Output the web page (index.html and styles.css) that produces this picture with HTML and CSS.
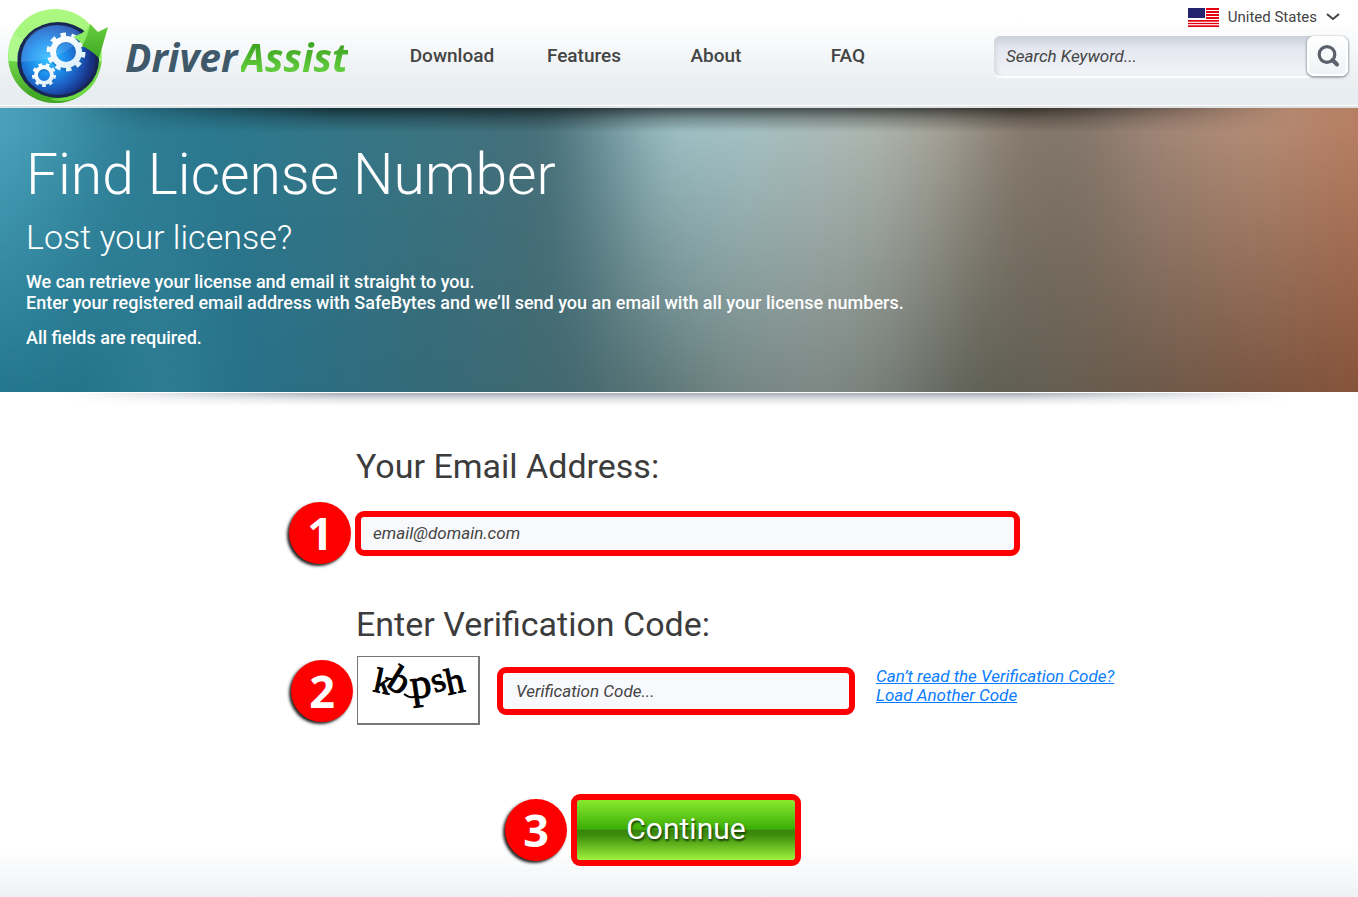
FILE: index.html
```html
<!DOCTYPE html>
<html lang="en">
<head>
<meta charset="utf-8">
<title>Find License Number - DriverAssist</title>
<link rel="stylesheet" href="styles.css">
</head>
<body>
<header class="header">
  <a class="brand" href="#">
    <svg class="brand-mark" viewBox="0 0 110 105" aria-hidden="true">
      <defs>
        <linearGradient id="ring" x1="0" y1="0" x2="0" y2="1"><stop offset="0" stop-color="#adf982"/><stop offset=".55" stop-color="#9cf27a"/><stop offset=".56" stop-color="#6fd348"/><stop offset="1" stop-color="#3c9f20"/></linearGradient>
        <linearGradient id="tip" x1=".5" y1="0" x2=".5" y2="1"><stop offset="0" stop-color="#67cf3e"/><stop offset="1" stop-color="#3fa925"/></linearGradient>
        <radialGradient id="globe" cx=".36" cy=".48" r=".6"><stop offset="0" stop-color="#35c3ff"/><stop offset=".4" stop-color="#1c8fec"/><stop offset=".75" stop-color="#1c58bb"/><stop offset="1" stop-color="#182f80"/></radialGradient>
        <linearGradient id="gear" x1="0" y1="0" x2="1" y2="1"><stop offset="0" stop-color="#ffffff"/><stop offset="1" stop-color="#dceffb"/></linearGradient>
      </defs>
      <circle cx="55" cy="56" r="47" fill="url(#ring)"/>
      <path d="M27 91Q45 91 69 90L95 78Q84 102 56 103Q38 103 27 91Z" fill="#45a928"/>
      <path d="M50 99Q70 99 85 87Q96 78 99 61Q101 84 80 96Q64 104 50 99Z" fill="#6fd946"/>
      <ellipse cx="58" cy="60" rx="41" ry="38" fill="#172752"/>
      <ellipse cx="58" cy="60" rx="37" ry="35" fill="url(#globe)"/>
      <path d="M21 62Q22 26 57 25Q73 25 82 35Q67 61 21 62Z" fill="#8fc9ff" opacity=".24"/>
      <path d="M9 60Q8 46 14 34L23 40Q17 49 18 62Z" fill="#c0ffa0" opacity=".5"/>
      <g fill="none" stroke="#1767b4" opacity=".55" transform="translate(1 2)">
        <circle cx="66" cy="52" r="14" stroke-width="6"/><circle cx="44" cy="75" r="8" stroke-width="4"/>
      </g>
      <g fill="none" stroke="url(#gear)">
        <circle cx="66" cy="52" r="13" stroke-width="6"/>
        <circle cx="66" cy="52" r="17" stroke-width="5" pathLength="20" stroke-dasharray="1 1"/>
        <circle cx="44" cy="75" r="8" stroke-width="4"/>
        <circle cx="44" cy="75" r="10" stroke-width="4" pathLength="18" stroke-dasharray="1 1"/>
      </g>
      <path d="M73 37L82 33L92 25L96 40L84 47Q80 40 73 37Z" fill="#8bea63"/>
      <path d="M90 24L98 32L108 27L99 58Q91 50 82 46Q88 36 90 24Z" fill="url(#tip)"/>
    </svg>
    <span class="brand-name">Driver<span class="brand-accent">Assist</span></span>
  </a>
  <nav class="nav">
    <a href="#">Download</a>
    <a href="#">Features</a>
    <a href="#">About</a>
    <a href="#">FAQ</a>
  </nav>
  <div class="tools">
    <button class="region" type="button">
      <svg width="31" height="19" viewBox="0 0 31 19" aria-hidden="true">
        <path fill="#fff" d="M0 0h31v19H0z"/>
        <path stroke="#e3000f" stroke-width="2" d="M0 1h31M0 4h31M0 7h31M0 10h31M0 13h31M0 15.500h31M0 18h31" />
        <path stroke="#fff" d="M17 2.500h14M17 5.500h14M17 8.500h14M0 11.500h31M0 14.200h31M0 16.800h31"/>
        <path fill="#fff" d="M0 0h18v11H0z"/>
        <path fill="#24236e" d="M0 0h17v10H0z"/>
      </svg>
      <span>United States</span>
      <svg width="14" height="8" viewBox="0 0 14 8" aria-hidden="true"><path d="M1 1L7 6L13 1" fill="none" stroke="#444" stroke-width="2"/></svg>
    </button>
    <form class="search">
      <input type="search" aria-label="Search" placeholder="Search Keyword...">
      <button type="submit" aria-label="Search">
        <svg width="24" height="24" viewBox="0 0 24 24" aria-hidden="true"><circle cx="11" cy="10.500" r="7.800" fill="none" stroke="#5b616c" stroke-width="3.200"/><path d="M16.500 16L21 20.500" stroke="#5b616c" stroke-width="4" stroke-linecap="round"/></svg>
      </button>
    </form>
  </div>
</header>

<section class="hero">
  <div class="hero-art"></div>
  <h1>Find License Number</h1>
  <p class="hero-lead">Lost your license?</p>
  <p>We can retrieve your license and email it straight to you.<br>Enter your registered email address with SafeBytes and we’ll send you an email with all your license numbers.</p>
  <p>All fields are required.</p>
</section>

<main class="main">
  <form class="license-form">
    <label class="title" for="email">Your Email Address:</label>
    <div class="row">
      <span class="badge">1</span>
      <input class="field email" id="email" type="email" placeholder="email@domain.com">
    </div>
    <label class="title code-title" for="code">Enter Verification Code:</label>
    <div class="row code-row">
      <span class="badge">2</span>
      <svg class="captcha" viewBox="0 0 120 66" role="img" aria-label="Verification code">
        <g font-family="Liberation Serif, serif" font-size="35" stroke="#000" stroke-width="1">
          <text transform="translate(14 34) rotate(12)">k</text>
          <text transform="translate(27 29) rotate(32)" font-size="38">b</text>
          <text transform="translate(54 42) rotate(-8)" font-size="42">p</text>
          <text transform="translate(77 36) rotate(-20)">s</text>
          <text transform="translate(90 38) rotate(-12)" font-size="37">h</text>
          <path d="M46 37Q54 43 60 38" fill="none" stroke-width="2"/>
        </g>
      </svg>
      <input class="field code" id="code" type="text" placeholder="Verification Code...">
      <a class="reload" href="#">Can’t read the Verification Code?<br>Load Another Code</a>
    </div>
    <div class="row submit-row">
      <span class="badge">3</span>
      <button class="continue" type="submit">Continue</button>
    </div>
  </form>
</main>
</body>
</html>
```
FILE: styles.css
```css
* { box-sizing: border-box; }
body {
  margin: 0;
  min-height: 100vh;
  font-family: Roboto, sans-serif;
  color: #3c3c3c;
  background: linear-gradient(to top, #eff2f5, #fff 50px);
}
button, input { font: inherit; color: inherit; }

.header {
  height: 108px;
  display: flex;
  background: linear-gradient(#fff 20%, #e8edf1 85%);
  border-bottom: 2px solid #dde1e4;
  box-shadow: inset 0 -1px #fff;
}
.brand { display: flex; text-decoration: none; }
.brand-mark { width: 110px; height: 105px; }
.brand-name {
  margin-left: 15px;
  padding-top: 31px;
  font: italic bold 39px/52px "Open Sans", sans-serif;
  color: #40596a;
}
.brand-accent {
  margin-left: 3px;
  color: transparent;
  background: linear-gradient(#3fa622 30%, #62cb3d 75%);
  background-clip: text;
}
.nav {
  display: flex;
  margin-left: 38px;
  padding-top: 44px;
  font-size: 19px;
  line-height: 24px;
  font-weight: 500;
}
.nav a { color: #444; text-decoration: none; text-align: center; width: 132px; }
.tools {
  display: flex;
  flex-direction: column;
  align-items: flex-end;
  gap: 7px;
  margin-left: auto;
  padding: 5px 10px 0 0;
}
.region {
  display: flex;
  align-items: center;
  gap: 9px;
  height: 24px;
  padding: 0 8px 0 0;
  border: 0;
  background: none;
  font-size: 15px;
  color: #444;
}
.search {
  display: flex;
  width: 354px;
  height: 40px;
  border-radius: 6px;
  background: linear-gradient(#c9ced8, #e4e7ef 30%, #f1f2f8 90%);
  box-shadow: 0 2px #fff, inset 5px 0 5px -3px #d4d8e0;
}
.search input {
  flex: 1;
  min-width: 0;
  padding: 0 12px;
  border: 0;
  background: none;
  font-size: 17px;
  font-style: italic;
}
.search button {
  display: grid;
  place-items: center;
  width: 41px;
  padding: 0;
  border: 2px solid #fff;
  border-radius: 7px;
  background: linear-gradient(#fff, #eff2f6);
  box-shadow: 0 1px 2px 1px #a2a8b2;
}
::placeholder { color: #444; opacity: 1; }

.hero {
  position: relative;
  padding: 31px 26px 30px;
  color: #fff;
}
.hero-art {
  position: absolute;
  inset: 0;
  overflow: hidden;
}
.hero-art::before, .hero-art::after {
  content: "";
  position: absolute;
  inset: -60px;
  filter: blur(20px);
}
.hero-art::before {
  background: linear-gradient(to right, #25788f 4%, #23748a 10%, #2f7e94 15%, #27718a 20%, #356a78 33%, #44696f 43%, #5a7577 48%, #758785 54%, #7f8985 60%, #747a74 65%, #5f6055 70%, #655f53 75%, #6c5a4b 81%, #795744 88%, #87533a 96%);
}
.hero-art::after {
  background: linear-gradient(to right, #4ba3bc 4%, #3f94ac 8%, #2e7d95 13%, #2b788e 19%, #3a7482 32%, #466e79 41%, #6f949b 45%, #9bbec3 49%, #a3c0c3 54%, #adb6b0 63%, #a29f94 68%, #85786b 73%, #82766a 77%, #9f8577 82%, #b38c75 89%, #b67e62 96%);
  mask-image: linear-gradient(#000 20%, transparent 85%);
}
.hero::before, .main::before {
  content: "";
  position: absolute;
  inset: 0 0 auto;
  z-index: 1;
  mask-image: linear-gradient(to right, transparent 5%, #000 25%, #000 75%, transparent 95%);
}
.hero::before {
  height: 24px;
  background: linear-gradient(rgb(0 0 0 / .58), rgb(0 0 0 / .25) 45%, transparent);
}
.hero > :not(.hero-art) { position: relative; z-index: 2; }
.hero h1 { margin: 0; font-size: 57px; line-height: 72px; font-weight: 300; }
.hero p { margin: 0 0 14px; font-size: 18px; line-height: 21px; font-weight: 500; }
.hero .hero-lead { margin: 5px 0 13px; font-size: 34px; line-height: 42px; font-weight: 300; }

.main {
  position: relative;
  display: flex;
  justify-content: center;
  padding: 52px 0 30px 52px;
  border-top: 1px solid #fff;
}
.main::before {
  height: 13px;
  background: linear-gradient(rgb(110 118 135 / .6), rgb(110 118 135 / .2) 50%, transparent);
}
.license-form { width: 834px; }
.title {
  display: block;
  padding-left: 68px;
  font-size: 34px;
  line-height: 42px;
}
.row { display: flex; align-items: center; gap: 4px; padding-top: 15px; }
.row > * { flex: none; }
.badge {
  display: grid;
  place-items: center;
  width: 62px;
  height: 62px;
  margin-left: 1px;
  border-radius: 50%;
  background: #f00;
  box-shadow: -2px 2px 3px #222;
  font: bold 45px/60px "Open Sans", sans-serif;
  color: #fff;
}
.field {
  height: 45px;
  border: 6px solid #f00;
  border-radius: 9px;
  padding: 0 12px;
  background: #f8f9fc;
  font-size: 17px;
  font-style: italic;
}
.email { width: 665px; }
.code-title { margin-top: 39px; }
.code-row { padding: 11px 0 0 2px; }
.captcha { width: 123px; height: 69px; border: 1px solid #777; border-width: 1px 2px 2px 1px; background: #fff; }
.code { width: 358px; height: 48px; margin-left: 13px; padding: 0 13px; }
.reload {
  margin: -10px 0 0 17px;
  font-size: 17px;
  line-height: 19px;
  font-style: italic;
  color: #0a7cff;
  white-space: nowrap;
}
.submit-row { padding: 69px 0 0 216px; }
.continue {
  width: 230px;
  height: 72px;
  padding: 0 0 3px;
  border: 6px solid #f00;
  border-radius: 9px;
  background: linear-gradient(#8ae92e, #3bad06 49%, #39820c 50%, #3f900d 60%, #9ff33c) padding-box;
  font-size: 30px;
  color: #fff;
  text-shadow: 1px 2px 2px #173f00;
}
```
